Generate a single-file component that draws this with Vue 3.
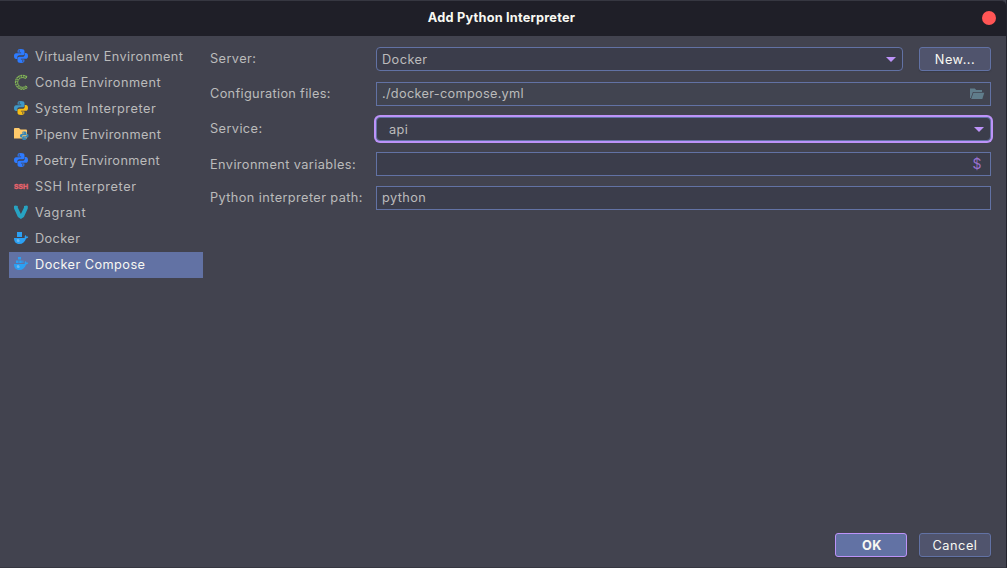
<script setup>
const items = [
  { label: 'Virtualenv Environment', icon: 'python', spacing: 0.39 },
  { label: 'Conda Environment', icon: 'conda', spacing: 0.45 },
  { label: 'System Interpreter', icon: 'system', spacing: 0.52 },
  { label: 'Pipenv Environment', icon: 'pipenv', spacing: 0.35 },
  { label: 'Poetry Environment', icon: 'python', spacing: 0.37 },
  { label: 'SSH Interpreter', icon: 'ssh', spacing: 0.57 },
  { label: 'Vagrant', icon: 'vagrant', spacing: 0.63 },
  { label: 'Docker', icon: 'docker', spacing: 0.38 },
  { label: 'Docker Compose', icon: 'compose', spacing: 0.43 },
]
const pyTop =
  'M7.9 1C5.3 1 4.6 1.9 4.6 3.2V4.6H8.1V5.2H3.2C1.7 5.2 1 6.4 1 8.1C1 9.9 1.8 11 3.1 11H4.3V9.3C4.3 8 5.3 7.2 6.5 7.2H9.7C10.8 7.2 11.5 6.4 11.5 5.4V3.2C11.5 1.7 10.3 1 7.9 1ZM6.2 2.2A.75.75 0 1 1 6.2 3.7A.75.75 0 1 1 6.2 2.2Z'
</script>

<template>
  <div class="dialog">
    <header class="titlebar">
      <span class="title">Add Python Interpreter</span>
      <i class="close"></i>
    </header>
    <main class="content">
      <ul class="sidebar">
        <li v-for="item in items" :key="item.label" :class="{ selected: item.icon === 'compose' }">
          <svg class="icon" viewBox="0 0 16 16">
            <g v-if="item.icon === 'python' || item.icon === 'system'" fill-rule="evenodd">
              <path :d="pyTop" :fill="item.icon === 'system' ? '#3f98c6' : '#2e7bff'" />
              <path :d="pyTop" transform="rotate(180 8 8)" :fill="item.icon === 'system' ? '#f5bd16' : '#2e7bff'" />
            </g>
            <g v-else-if="item.icon === 'conda'" fill="none" stroke="#86bd57">
              <path d="M13.9 2.8A7 7 0 1 0 14.3 13.3" stroke-width="1.2" stroke-dasharray="1.9 .5" />
              <path d="M12.6 4.6A4.9 4.9 0 1 0 13 11.9" stroke-width="1" />
              <path d="M13.3 3.7A5.9 5.9 0 1 0 13.6 12.6" stroke-width="1.1" stroke-dasharray=".8 1.6" />
              <path d="M13.9 2.8L12.6 4.6M14.3 13.3L13 11.9" stroke-width="1" />
            </g>
            <g v-else-if="item.icon === 'pipenv'">
              <path d="M1 3.2C1 2.5 1.4 2 2.1 2H6L7.5 3.6H12.8C13.6 3.6 14 4.1 14 4.8V12.6H1Z" fill="#ffca6b" />
              <g transform="translate(6.4 4.9) scale(.61)">
                <path :d="pyTop" fill="#3485b8" />
                <path :d="pyTop" transform="rotate(180 8 8)" fill="#3485b8" />
              </g>
            </g>
            <text v-else-if="item.icon === 'ssh'" class="ssh" x="1" y="10.7" textLength="14" lengthAdjust="spacingAndGlyphs">SSH</text>
            <path v-else-if="item.icon === 'vagrant'" fill="#27a3c2" d="M1 2L2.2 1.4L4.8 2V3.6L7.9 10L11 3.6V2L13.5 1.4L14.8 2V4.6L10.9 13L7.9 15L4.9 13L1 4.6Z" />
            <g v-else fill="#2ba0f3">
              <path v-if="item.icon === 'docker'" d="M4 2H9V7H4Z" />
              <path v-else d="M5 1H8V3.5H5ZM3 4.4H5.6V7H3ZM6.2 4.4H8.8V7H6.2ZM9.4 4.4H10.4V7H9.4Z" />
              <path d="M1 8H11.7C11.5 6.8 11.8 5.8 12.5 5C13.1 5.5 13.4 6 13.4 6.7C14.1 6.5 14.8 6.6 15.3 7C14.9 7.9 14.2 8.3 13.1 8.4C12 11.8 9.7 14 6.3 14C2.8 14 1 11.8 1 8Z" />
              <path d="M4.3 9.7H5.7V10.8H6.5M4.3 9.7V11.3H6.3" fill="none" stroke="#96c9ef" stroke-width=".7" />
            </g>
          </svg>
          <span :style="{ letterSpacing: item.spacing + 'px' }">{{ item.label }}</span>
        </li>
      </ul>

      <form class="form" @submit.prevent>
        <div class="row">
          <label>Server:</label>
          <div class="field combo">Docker<i class="arrow"></i></div>
          <button class="new">New...</button>
        </div>
        <div class="row">
          <label class="tight">Configuration files:</label>
          <div class="field clear">
            <span class="path">./docker-compose.yml</span>
            <svg class="folder" viewBox="0 0 16 16">
              <path d="M1 12V2.5H5.8L7.2 4H13V6H3.9L1.8 12Z" />
              <path d="M4.4 6.7H15.3L13.3 13H2.2Z" />
            </svg>
          </div>
        </div>
        <div class="row">
          <label>Service:</label>
          <div class="field combo focused">api<i class="arrow"></i></div>
        </div>
        <div class="row env">
          <label class="low">Environment variables:</label>
          <div class="field"><span class="dollar">$</span></div>
        </div>
        <div class="row">
          <label>Python interpreter path:</label>
          <div class="field">python</div>
        </div>
      </form>
    </main>
    <footer class="actions">
      <button class="primary">OK</button>
      <button>Cancel</button>
    </footer>
  </div>
</template>

<style>
body {
  background: #414450;
}
</style>

<style scoped>
* {
  box-sizing: border-box;
}
.dialog {
  width: 1007px;
  height: 568px;
  display: flex;
  flex-direction: column;
  background: #42434f;
  border-right: 1px solid #22232d;
  border-bottom: 1px solid #363741;
  color: #bbb;
  font: 12.75px/16px Inter, sans-serif;
  letter-spacing: 0.52px;
  overflow: hidden;
}
.titlebar {
  height: 36px;
  flex: none;
  display: flex;
  align-items: center;
  justify-content: flex-end;
  padding-right: 10px;
  background: #1f1f28;
  border-top: 1px solid #363741;
  border-radius: 0 5px 0 0;
}
.title {
  flex: 1;
  padding: 0 0 1px 21px;
  text-align: center;
  color: #f8f8f2;
  font-weight: 700;
  letter-spacing: 0.21px;
}
.close {
  width: 14px;
  height: 14px;
  border-radius: 50%;
  background: #ff5555;
  margin-bottom: 1px;
}
.content {
  flex: 1;
  display: flex;
  gap: 7px;
  padding: 8px 15px 0 9px;
}
.sidebar {
  list-style: none;
  margin: 0;
  padding: 0;
  width: 194px;
}
.sidebar li {
  height: 26px;
  display: flex;
  align-items: center;
  gap: 6px;
  padding-left: 4px;
}
.sidebar .selected {
  background: #6272a4;
  color: #f8f8f2;
}
.icon {
  width: 16px;
  height: 16px;
  margin-bottom: 2px;
}
.ssh {
  font: 700 6px Inter, sans-serif;
  letter-spacing: 0;
  fill: #e8636c;
  stroke: #e8636c;
  stroke-width: 0.3px;
}
.form {
  flex: 1;
  display: flex;
  flex-direction: column;
  gap: 11px;
  padding-top: 3px;
}
.row {
  height: 24px;
  display: flex;
  align-items: center;
}
.row.env {
  margin-bottom: -1px;
}
label {
  width: 166px;
  letter-spacing: 0.4px;
}
label.low {
  padding-top: 2px;
}
label.tight {
  letter-spacing: 0.32px;
}
.field {
  flex: 1;
  height: 24px;
  display: flex;
  align-items: center;
  justify-content: space-between;
  padding: 0 6px 0 5px;
  border: 1px solid #6272a4;
  background: #3b3d4b;
  letter-spacing: 0.42px;
}
.field.clear {
  background: #414450;
}
.path {
  letter-spacing: 0.29px;
}
.combo {
  padding-top: 2px;
  border-radius: 4px;
}
.focused {
  padding-left: 12px;
  box-shadow: 0 0 0 2px #bd93f9;
}
.arrow {
  margin-bottom: 1px;
  border: 5px solid transparent;
  border-top-color: #bd93f9;
  border-bottom: 0;
}
.folder {
  width: 16px;
  height: 16px;
  margin-right: -1px;
  fill: #607d8b;
}
.dollar {
  margin: 0 2px 0 auto;
  color: #9a72cf;
  font-size: 14px;
}
button {
  width: 72px;
  height: 24px;
  padding: 2px 0 0;
  border: 1px solid #6272a4;
  border-radius: 3px;
  background: #50546d;
  color: #f8f8f2;
  font: inherit;
  letter-spacing: inherit;
  box-shadow: 0 1px 1px #393b46;
}
.new {
  margin-left: 16px;
}
.actions {
  display: flex;
  justify-content: flex-end;
  gap: 12px;
  padding: 0 15px 10px 0;
}
.primary {
  padding-left: 2px;
  border-color: #bd93f9;
  background: #6272a4;
  font-weight: 700;
}
</style>
